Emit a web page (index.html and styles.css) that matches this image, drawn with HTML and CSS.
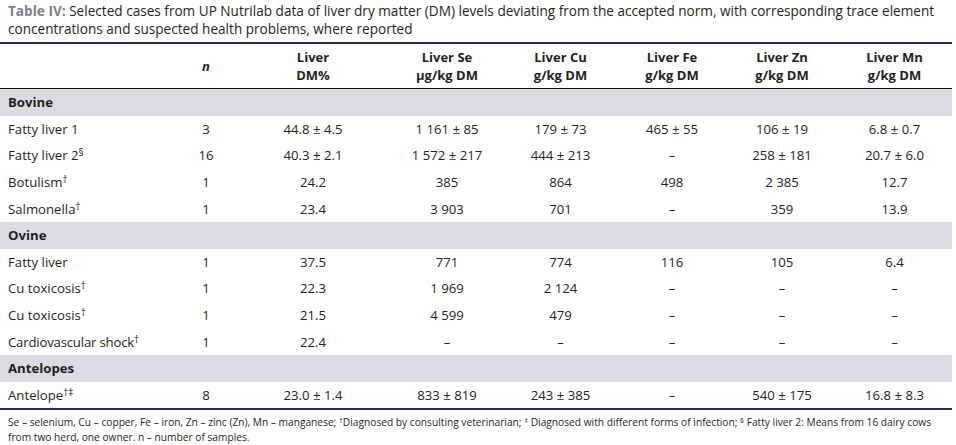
FILE: index.html
```html
<!DOCTYPE html>
<html lang="en">
<head>
<meta charset="utf-8">
<title>Table IV</title>
<link rel="stylesheet" href="styles.css">
</head>
<body>
<div class="figure">
  <p class="caption"><span class="label">Table IV:</span> Selected cases from UP Nutrilab data of liver dry matter (DM) levels deviating from the accepted norm, with corresponding trace element<br>concentrations and suspected health problems, where reported</p>
  <table class="data">
    <colgroup>
      <col class="c-name">
      <col class="c-n">
      <col class="c-dm">
      <col class="c-se">
      <col class="c-cu">
      <col class="c-fe">
      <col class="c-zn">
      <col class="c-mn">
    </colgroup>
    <thead>
      <tr>
        <th class="name"></th>
        <th class="n"><i>n</i></th>
        <th class="dm">Liver<br>DM%</th>
        <th class="se">Liver Se<br>µg/kg DM</th>
        <th>Liver Cu<br>g/kg DM</th>
        <th>Liver Fe<br>g/kg DM</th>
        <th>Liver Zn<br>g/kg DM</th>
        <th>Liver Mn<br>g/kg DM</th>
      </tr>
    </thead>
    <tbody>
      <tr class="group"><td colspan="8">Bovine</td></tr>
      <tr><td class="name">Fatty liver 1</td><td>3</td><td class="dm">44.8 ± 4.5</td><td class="se">1 161 ± 85</td><td>179 ± 73</td><td>465 ± 55</td><td>106 ± 19</td><td>6.8 ± 0.7</td></tr>
      <tr><td class="name">Fatty liver 2<sup>§</sup></td><td>16</td><td class="dm">40.3 ± 2.1</td><td class="se">1 572 ± 217</td><td>444 ± 213</td><td>–</td><td>258 ± 181</td><td>20.7 ± 6.0</td></tr>
      <tr><td class="name">Botulism<sup>†</sup></td><td>1</td><td class="dm">24.2</td><td class="se">385</td><td>864</td><td>498</td><td>2 385</td><td>12.7</td></tr>
      <tr><td class="name">Salmonella<sup>†</sup></td><td>1</td><td class="dm">23.4</td><td class="se">3 903</td><td>701</td><td>–</td><td>359</td><td>13.9</td></tr>
      <tr class="group"><td colspan="8">Ovine</td></tr>
      <tr><td class="name">Fatty liver</td><td>1</td><td class="dm">37.5</td><td class="se">771</td><td>774</td><td>116</td><td>105</td><td>6.4</td></tr>
      <tr><td class="name">Cu toxicosis<sup>†</sup></td><td>1</td><td class="dm">22.3</td><td class="se">1 969</td><td>2 124</td><td>–</td><td>–</td><td>–</td></tr>
      <tr><td class="name">Cu toxicosis<sup>†</sup></td><td>1</td><td class="dm">21.5</td><td class="se">4 599</td><td>479</td><td>–</td><td>–</td><td>–</td></tr>
      <tr><td class="name narrow">Cardiovascular shock<sup>†</sup></td><td>1</td><td class="dm">22.4</td><td class="se">–</td><td>–</td><td>–</td><td>–</td><td>–</td></tr>
      <tr class="group"><td colspan="8">Antelopes</td></tr>
      <tr class="last"><td class="name">Antelope<sup>†‡</sup></td><td>8</td><td class="dm">23.0 ± 1.4</td><td class="se">833 ± 819</td><td>243 ± 385</td><td>–</td><td>540 ± 175</td><td>16.8 ± 8.3</td></tr>
    </tbody>
  </table>
  <p class="notes">Se – selenium, Cu – copper, Fe – iron, Zn – zinc (Zn), Mn – manganese; <sup>†</sup>Diagnosed by consulting veterinarian; <sup>‡</sup> Diagnosed with different forms of infection; <sup>§</sup> Fatty liver 2: Means from 16 dairy cows<br>from two herd, one owner. n – number of samples.</p>
</div>
</body>
</html>
```
FILE: styles.css
```css
html, body {
  margin: 0;
  padding: 0;
  background: #ffffff;
}

body {
  font-family: "Open Sans", "Noto Sans", "Liberation Sans", sans-serif;
  color: #231f20;
}

.figure {
  width: 952px;
}

.caption {
  margin: 0;
  padding: 2px 8px 5px;
  font-size: 13.6px;
  line-height: 17.5px;
  color: #231f20;
}

.caption .label {
  font-weight: 700;
  color: #7d808c;
}

.data {
  width: 952px;
  table-layout: fixed;
  border-collapse: separate;
  border-spacing: 0;
  font-size: 13.2px;
}

.c-name { width: 152px; }
.c-n { width: 108px; }
.c-dm { width: 120px; }
.c-se { width: 124px; }
.c-cu { width: 113px; }
.c-fe { width: 110px; }
.c-zn { width: 110px; }
.c-mn { width: 115px; }

.data th {
  height: 44px;
  padding: 0;
  border-top: 2px solid #262a5b;
  border-bottom: 1px solid #111111;
  font-size: 13px;
  font-weight: 700;
  line-height: 18px;
  text-align: center;
  vertical-align: middle;
}

.data th.n i {
  font-weight: 700;
}

.data td {
  height: 26.6px;
  padding: 0;
  line-height: 18px;
  text-align: center;
  vertical-align: middle;
  white-space: nowrap;
}

.data td.name {
  text-align: left;
  padding-left: 8px;
}

.data td.narrow {
  letter-spacing: -0.2px;
}

.data .dm {
  padding-right: 14px;
}

.data .se {
  padding-left: 10px;
}

.data .group td {
  background: #dcdbe4;
  font-weight: 700;
  text-align: left;
  padding-left: 8px;
}

.data .last td {
  border-bottom: 2px solid #262a5b;
}

sup {
  font-size: 0.75em;
  line-height: 0;
  vertical-align: 0.45em;
  letter-spacing: 0;
}

.notes {
  margin: 0;
  padding: 5px 8px 0;
  font-size: 10.2px;
  line-height: 15px;
  white-space: nowrap;
}

.notes sup {
  font-size: 0.75em;
  vertical-align: 0.4em;
}
```
